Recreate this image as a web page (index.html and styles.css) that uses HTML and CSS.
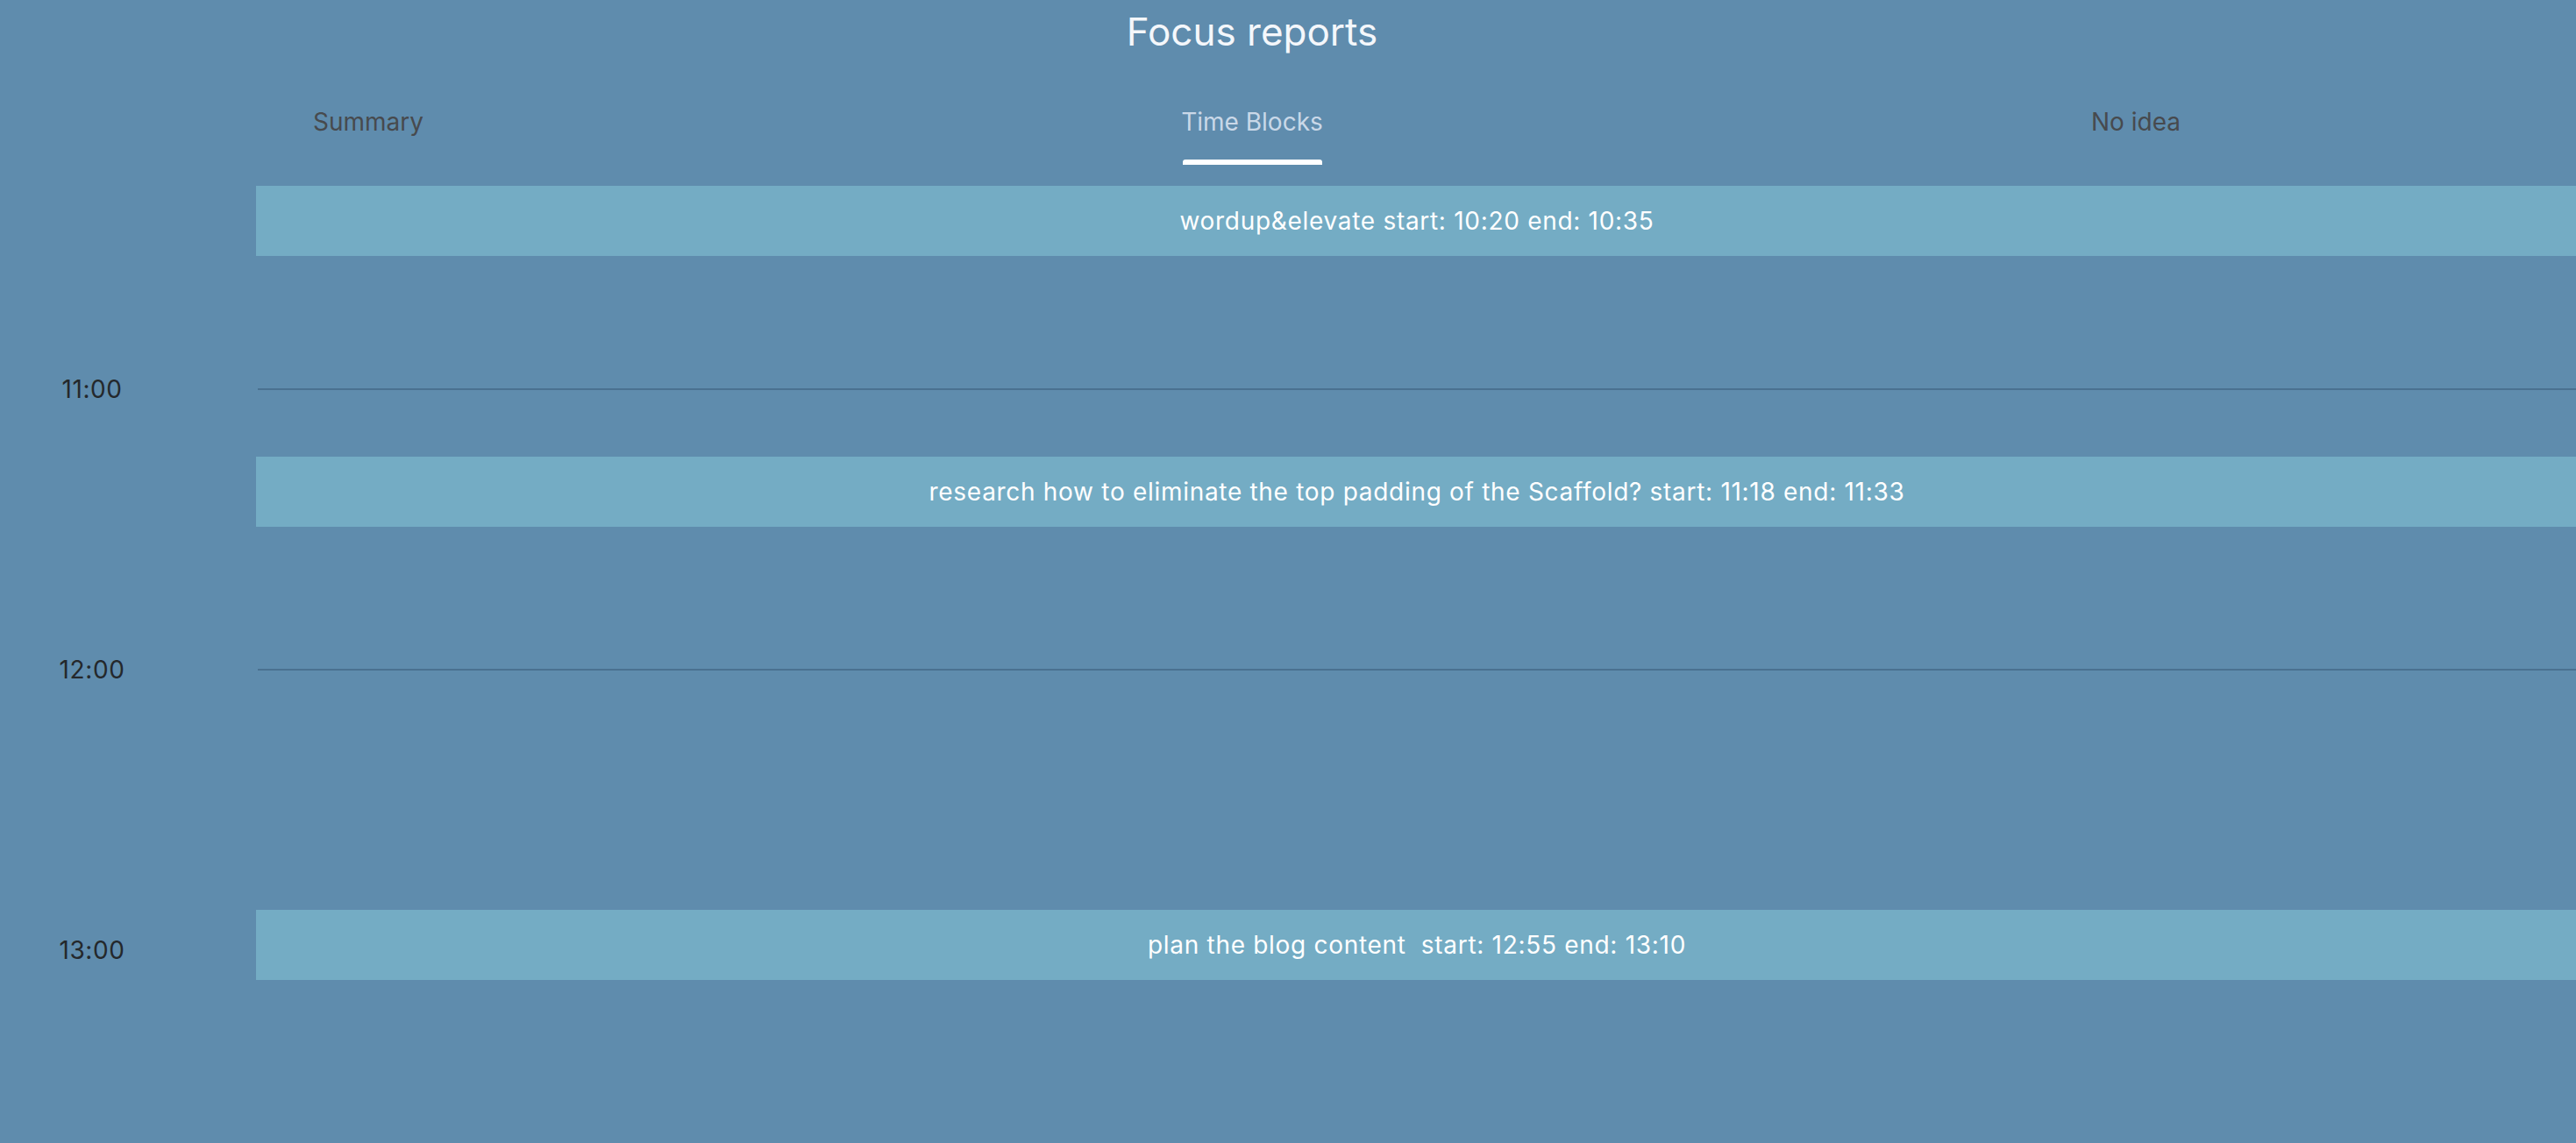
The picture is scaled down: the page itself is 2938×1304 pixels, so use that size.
FILE: index.html
```html
<!DOCTYPE html>
<html lang="en">
<head>
<meta charset="utf-8">
<title>Focus reports</title>
<link rel="stylesheet" href="styles.css">
</head>
<body>
  <div class="app">
    <header class="header">
      <h1 class="title">Focus reports</h1>
      <nav class="tabs">
        <div class="tab"><span class="tab-label">Summary</span><span class="indicator"></span></div>
        <div class="tab active"><span class="tab-label">Time Blocks</span><span class="indicator"></span></div>
        <div class="tab"><span class="tab-label">No idea</span><span class="indicator"></span></div>
      </nav>
    </header>
  </div>
  <main class="timeline">
    <div class="hours">
      <div class="hour"><span class="hour-label">11:00</span><span class="hour-line"></span></div>
      <div class="hour"><span class="hour-label">12:00</span><span class="hour-line"></span></div>
      <div class="hour"><span class="hour-label">13:00</span><span class="hour-line"></span></div>
    </div>
    <div class="block" style="top: 24px;">wordup&amp;elevate start: 10:20 end: 10:35</div>
    <div class="block" style="top: 333px;">research how to eliminate the top padding of the Scaffold? start: 11:18 end: 11:33</div>
    <div class="block" style="top: 850px;">plan the blog content&nbsp; start: 12:55 end: 13:10</div>
  </main>
</body>
</html>
```

FILE: styles.css
```css
* { box-sizing: border-box; }

html, body {
  margin: 0;
  padding: 0;
}

body {
  width: 2938px;
  height: 1304px;
  overflow: hidden;
  background: #5f8cad;
  font-family: Inter, "Noto Sans", "Liberation Sans", sans-serif;
}

.app {
  margin-left: -84px;
  width: 3024px;
}

.header {
  display: flex;
  flex-direction: column;
}

.title {
  margin: 0;
  padding-top: 8px;
  font-size: 44px;
  line-height: 56px;
  font-weight: 400;
  color: #f4f7fb;
  text-align: center;
}

.tabs {
  display: grid;
  grid-template-columns: repeat(3, 1fr);
}

.tab {
  display: flex;
  flex-direction: column;
  align-items: center;
  padding-top: 57px;
}

.tab-label {
  font-size: 28px;
  line-height: 36px;
  color: #474a4e;
}

.indicator {
  display: block;
  margin-top: 25px;
  height: 6px;
  width: 100%;
  visibility: hidden;
}

.tab.active .tab-label {
  color: #c9d8e8;
}

.tab.active .indicator {
  visibility: visible;
  align-self: center;
  width: 159px;
  background: #ffffff;
  border-radius: 3px 3px 0 0;
}

.timeline {
  position: relative;
  width: 2940px;
  height: 1116px;
  overflow: hidden;
}

.hours {
  display: flex;
  flex-direction: column;
  margin-top: 256px;
}

.hour {
  display: flex;
  align-items: flex-start;
  height: 320px;
}

.hour-label {
  width: 210px;
  margin-top: -18px;
  font-size: 28px;
  line-height: 36px;
  letter-spacing: 0.6px;
  color: #24282c;
  text-align: center;
}

.hour-line {
  flex: 1;
  margin-left: 84px;
  margin-top: -1px;
  height: 2px;
  background: #4a7190;
}

.block {
  position: absolute;
  left: 292px;
  right: 0;
  height: 80px;
  display: flex;
  align-items: center;
  justify-content: center;
  background: #74acc4;
  color: #ffffff;
  font-size: 28px;
  line-height: 36px;
  letter-spacing: 0.7px;
  white-space: pre;
}
```
